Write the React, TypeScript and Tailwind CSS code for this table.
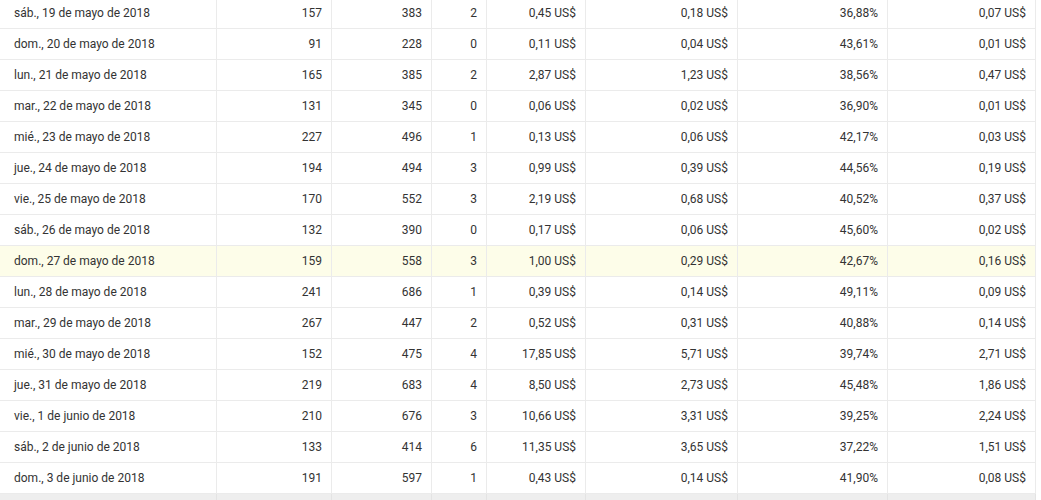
const rows = [
  ['sáb., 19 de mayo de 2018', '157', '383', '2', '0,45 US$', '0,18 US$', '36,88%', '0,07 US$'],
  ['dom., 20 de mayo de 2018', '91', '228', '0', '0,11 US$', '0,04 US$', '43,61%', '0,01 US$'],
  ['lun., 21 de mayo de 2018', '165', '385', '2', '2,87 US$', '1,23 US$', '38,56%', '0,47 US$'],
  ['mar., 22 de mayo de 2018', '131', '345', '0', '0,06 US$', '0,02 US$', '36,90%', '0,01 US$'],
  ['mié., 23 de mayo de 2018', '227', '496', '1', '0,13 US$', '0,06 US$', '42,17%', '0,03 US$'],
  ['jue., 24 de mayo de 2018', '194', '494', '3', '0,99 US$', '0,39 US$', '44,56%', '0,19 US$'],
  ['vie., 25 de mayo de 2018', '170', '552', '3', '2,19 US$', '0,68 US$', '40,52%', '0,37 US$'],
  ['sáb., 26 de mayo de 2018', '132', '390', '0', '0,17 US$', '0,06 US$', '45,60%', '0,02 US$'],
  ['dom., 27 de mayo de 2018', '159', '558', '3', '1,00 US$', '0,29 US$', '42,67%', '0,16 US$'],
  ['lun., 28 de mayo de 2018', '241', '686', '1', '0,39 US$', '0,14 US$', '49,11%', '0,09 US$'],
  ['mar., 29 de mayo de 2018', '267', '447', '2', '0,52 US$', '0,31 US$', '40,88%', '0,14 US$'],
  ['mié., 30 de mayo de 2018', '152', '475', '4', '17,85 US$', '5,71 US$', '39,74%', '2,71 US$'],
  ['jue., 31 de mayo de 2018', '219', '683', '4', '8,50 US$', '2,73 US$', '45,48%', '1,86 US$'],
  ['vie., 1 de junio de 2018', '210', '676', '3', '10,66 US$', '3,31 US$', '39,25%', '2,24 US$'],
  ['sáb., 2 de junio de 2018', '133', '414', '6', '11,35 US$', '3,65 US$', '37,22%', '1,51 US$'],
  ['dom., 3 de junio de 2018', '191', '597', '1', '0,43 US$', '0,14 US$', '41,90%', '0,08 US$'],
]

const grid = 'grid grid-cols-[217px_115px_100px_55px_99px_152px_150px_148px]'

export default function App() {
  return (
    <div className="w-[1041px] h-[500px] overflow-hidden bg-white font-['Roboto',sans-serif] text-[12px] text-[#333333]">
      <div className="w-[1036px] -mt-[2px]">
        {rows.map((row, i) => (
          <div
            key={i}
            className={`${grid} h-[31px] border-b border-[#ebebeb] ${i === 8 ? 'bg-[#fdfde9]' : 'bg-white'}`}
          >
            {row.map((cell, j) => (
              <div
                key={j}
                className={`flex items-center border-r border-[#ebebeb] ${j === 0 ? 'pl-[14px]' : 'justify-end pr-[9px]'}`}
              >
                {cell}
              </div>
            ))}
          </div>
        ))}
        <div className={`${grid} h-[20px] bg-[#eeeeee]`}>
          {rows[0].map((_, j) => (
            <div key={j} className="border-r border-[#e3e3e3]" />
          ))}
        </div>
      </div>
    </div>
  )
}
